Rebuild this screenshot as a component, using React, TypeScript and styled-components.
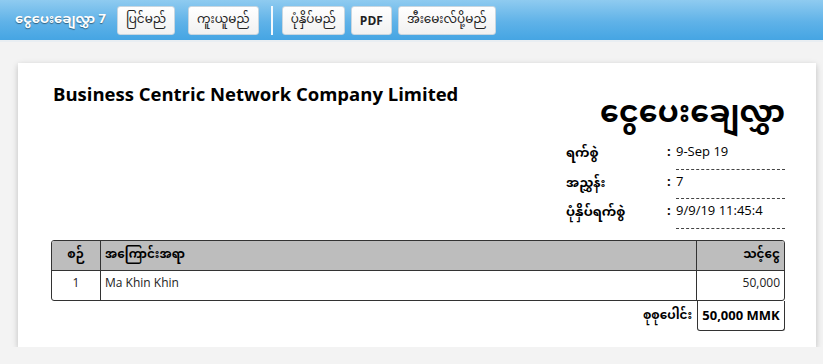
import React from 'react';
import styled, { createGlobalStyle } from 'styled-components';

const font = `"Open Sans", "Noto Sans Myanmar", "Padauk", "Myanmar Text", "Noto Sans", "DejaVu Sans", sans-serif`;

const GlobalStyle = createGlobalStyle`
  html, body {
    margin: 0;
    padding: 0;
    background: #f3f3f3;
    font-family: ${font};
    color: #000;
  }
`;

const items = [{ no: 1, name: 'Ma Khin Khin', amount: '50,000' }];

const App: React.FC<{}> = () => {
  return (
    <>
      <GlobalStyle />
      <Toolbar>
        <ToolbarTitle>ငွေပေးချေလွှာ 7</ToolbarTitle>
        <ButtonGroup gap={13}>
          <ToolButton>ပြင်မည်</ToolButton>
          <ToolButton>ကူးယူမည်</ToolButton>
        </ButtonGroup>
        <Separator />
        <ButtonGroup gap={6}>
          <ToolButton>ပုံနှိပ်မည်</ToolButton>
          <ToolButton bold>PDF</ToolButton>
          <ToolButton>အီးမေးလ်ပို့မည်</ToolButton>
        </ButtonGroup>
      </Toolbar>

      <Sheet>
        <Header>
          <Company>Business Centric Network Company Limited</Company>
          <HeaderRight>
            <DocTitle>ငွေပေးချေလွှာ</DocTitle>
            <InfoGrid>
              <InfoLabel>ရက်စွဲ</InfoLabel>
              <InfoColon>:</InfoColon>
              <InfoValue>9-Sep 19</InfoValue>

              <InfoLabel>အညွှန်း</InfoLabel>
              <InfoColon>:</InfoColon>
              <InfoValue>7</InfoValue>

              <InfoLabel>ပုံနှိပ်ရက်စွဲ</InfoLabel>
              <InfoColon>:</InfoColon>
              <InfoValue>9/9/19 11:45:4</InfoValue>
            </InfoGrid>
          </HeaderRight>
        </Header>

        <ItemTable>
          <thead>
            <tr>
              <HeadCell align="center" style={{ width: 40 }}>စဉ်</HeadCell>
              <HeadCell align="left">အကြောင်းအရာ</HeadCell>
              <HeadCell align="right" style={{ width: 79 }}>သင့်ငွေ</HeadCell>
            </tr>
          </thead>
          <tbody>
            {items.map((item) => (
              <tr key={item.no}>
                <BodyCell align="center">{item.no}</BodyCell>
                <BodyCell align="left">{item.name}</BodyCell>
                <BodyCell align="right">{item.amount}</BodyCell>
              </tr>
            ))}
          </tbody>
        </ItemTable>

        <TotalRow>
          <TotalLabel>စုစုပေါင်း</TotalLabel>
          <TotalBox>50,000 MMK</TotalBox>
        </TotalRow>
      </Sheet>
    </>
  );
};

export default App;

/* Styling */
const Toolbar = styled.div`
  display: flex;
  align-items: center;
  height: 42px;
  padding: 0 15px;
  box-sizing: border-box;
  background: linear-gradient(to bottom, #8fcbf0 0%, #5fb2e8 55%, #45a5e3 100%);
  border-bottom: 2px solid #e9eef2;
`;

const ToolbarTitle = styled.div`
  color: #fff;
  font-size: 13px;
  font-weight: 700;
  text-shadow: 0 1px 1px rgba(0, 0, 0, 0.45);
  margin-right: 11px;
  white-space: nowrap;
`;

const ButtonGroup = styled.div<{ gap: number }>`
  display: flex;
  gap: ${(p) => p.gap}px;
`;

const ToolButton = styled.button<{ bold?: boolean }>`
  height: 29px;
  padding: 0 8px;
  border: 1px solid #c8d6e0;
  border-radius: 3px;
  background: linear-gradient(to bottom, #ffffff 0%, #f1f1f1 100%);
  font-family: ${font};
  font-size: 12px;
  font-weight: ${(p) => (p.bold ? 700 : 400)};
  color: #222;
  white-space: nowrap;
  cursor: pointer;
`;

const Separator = styled.div`
  width: 2px;
  height: 29px;
  background: #f4f9fd;
  margin: 0 9px 0 12px;
`;

const Sheet = styled.div`
  margin: 21px 7px 0 18px;
  height: 284px;
  box-sizing: border-box;
  padding: 22px 31px 0 33px;
  background: #fff;
  box-shadow: 0 2px 6px rgba(0, 0, 0, 0.22);
`;

const Header = styled.div`
  display: flex;
  justify-content: space-between;
  align-items: flex-start;
`;

const Company = styled.h1`
  margin: -3px 0 0;
  padding-left: 2px;
  font-size: 18.5px;
  font-weight: 700;
  line-height: 24px;
`;

const HeaderRight = styled.div`
  display: flex;
  flex-direction: column;
  align-items: flex-end;
`;

const DocTitle = styled.div`
  font-size: 30px;
  font-weight: 700;
  line-height: 52px;
  height: 55px;
`;

const InfoGrid = styled.div`
  display: grid;
  grid-template-columns: 101px 9px 109px;
  grid-auto-rows: 29.5px;
  align-items: start;
  font-size: 13px;
  line-height: 22px;
`;

const InfoLabel = styled.div`
  font-weight: 700;
  padding-top: 1px;
`;

const InfoColon = styled.div`
  font-weight: 700;
`;

const InfoValue = styled.div`
  height: 100%;
  box-sizing: border-box;
  border-bottom: 1px dashed #444;
`;

const ItemTable = styled.table`
  width: 100%;
  margin-top: 11px;
  border-collapse: separate;
  border-spacing: 0;
  border: 1px solid #333;
  border-radius: 3px;
  overflow: hidden;
  font-size: 12px;
`;

const HeadCell = styled.th<{ align: 'left' | 'center' | 'right' }>`
  height: 29px;
  padding: 0 4px;
  background: #bdbdbd;
  font-weight: 700;
  text-align: ${(p) => p.align};
  border-bottom: 1px solid #333;
  & + & {
    border-left: 1px solid #333;
  }
`;

const BodyCell = styled.td<{ align: 'left' | 'center' | 'right' }>`
  height: 26px;
  padding: 3px 4px 0;
  vertical-align: top;
  text-align: ${(p) => p.align};
  color: #222;
  & + & {
    border-left: 1px solid #333;
  }
`;

const TotalRow = styled.div`
  display: flex;
  justify-content: flex-end;
  align-items: center;
`;

const TotalLabel = styled.div`
  font-size: 12px;
  font-weight: 700;
  margin-right: 5px;
`;

const TotalBox = styled.div`
  width: 88px;
  height: 30px;
  box-sizing: border-box;
  display: flex;
  align-items: center;
  justify-content: center;
  border: 1px solid #333;
  border-top: none;
  border-radius: 0 0 3px 3px;
  font-size: 13px;
  font-weight: 700;
`;
